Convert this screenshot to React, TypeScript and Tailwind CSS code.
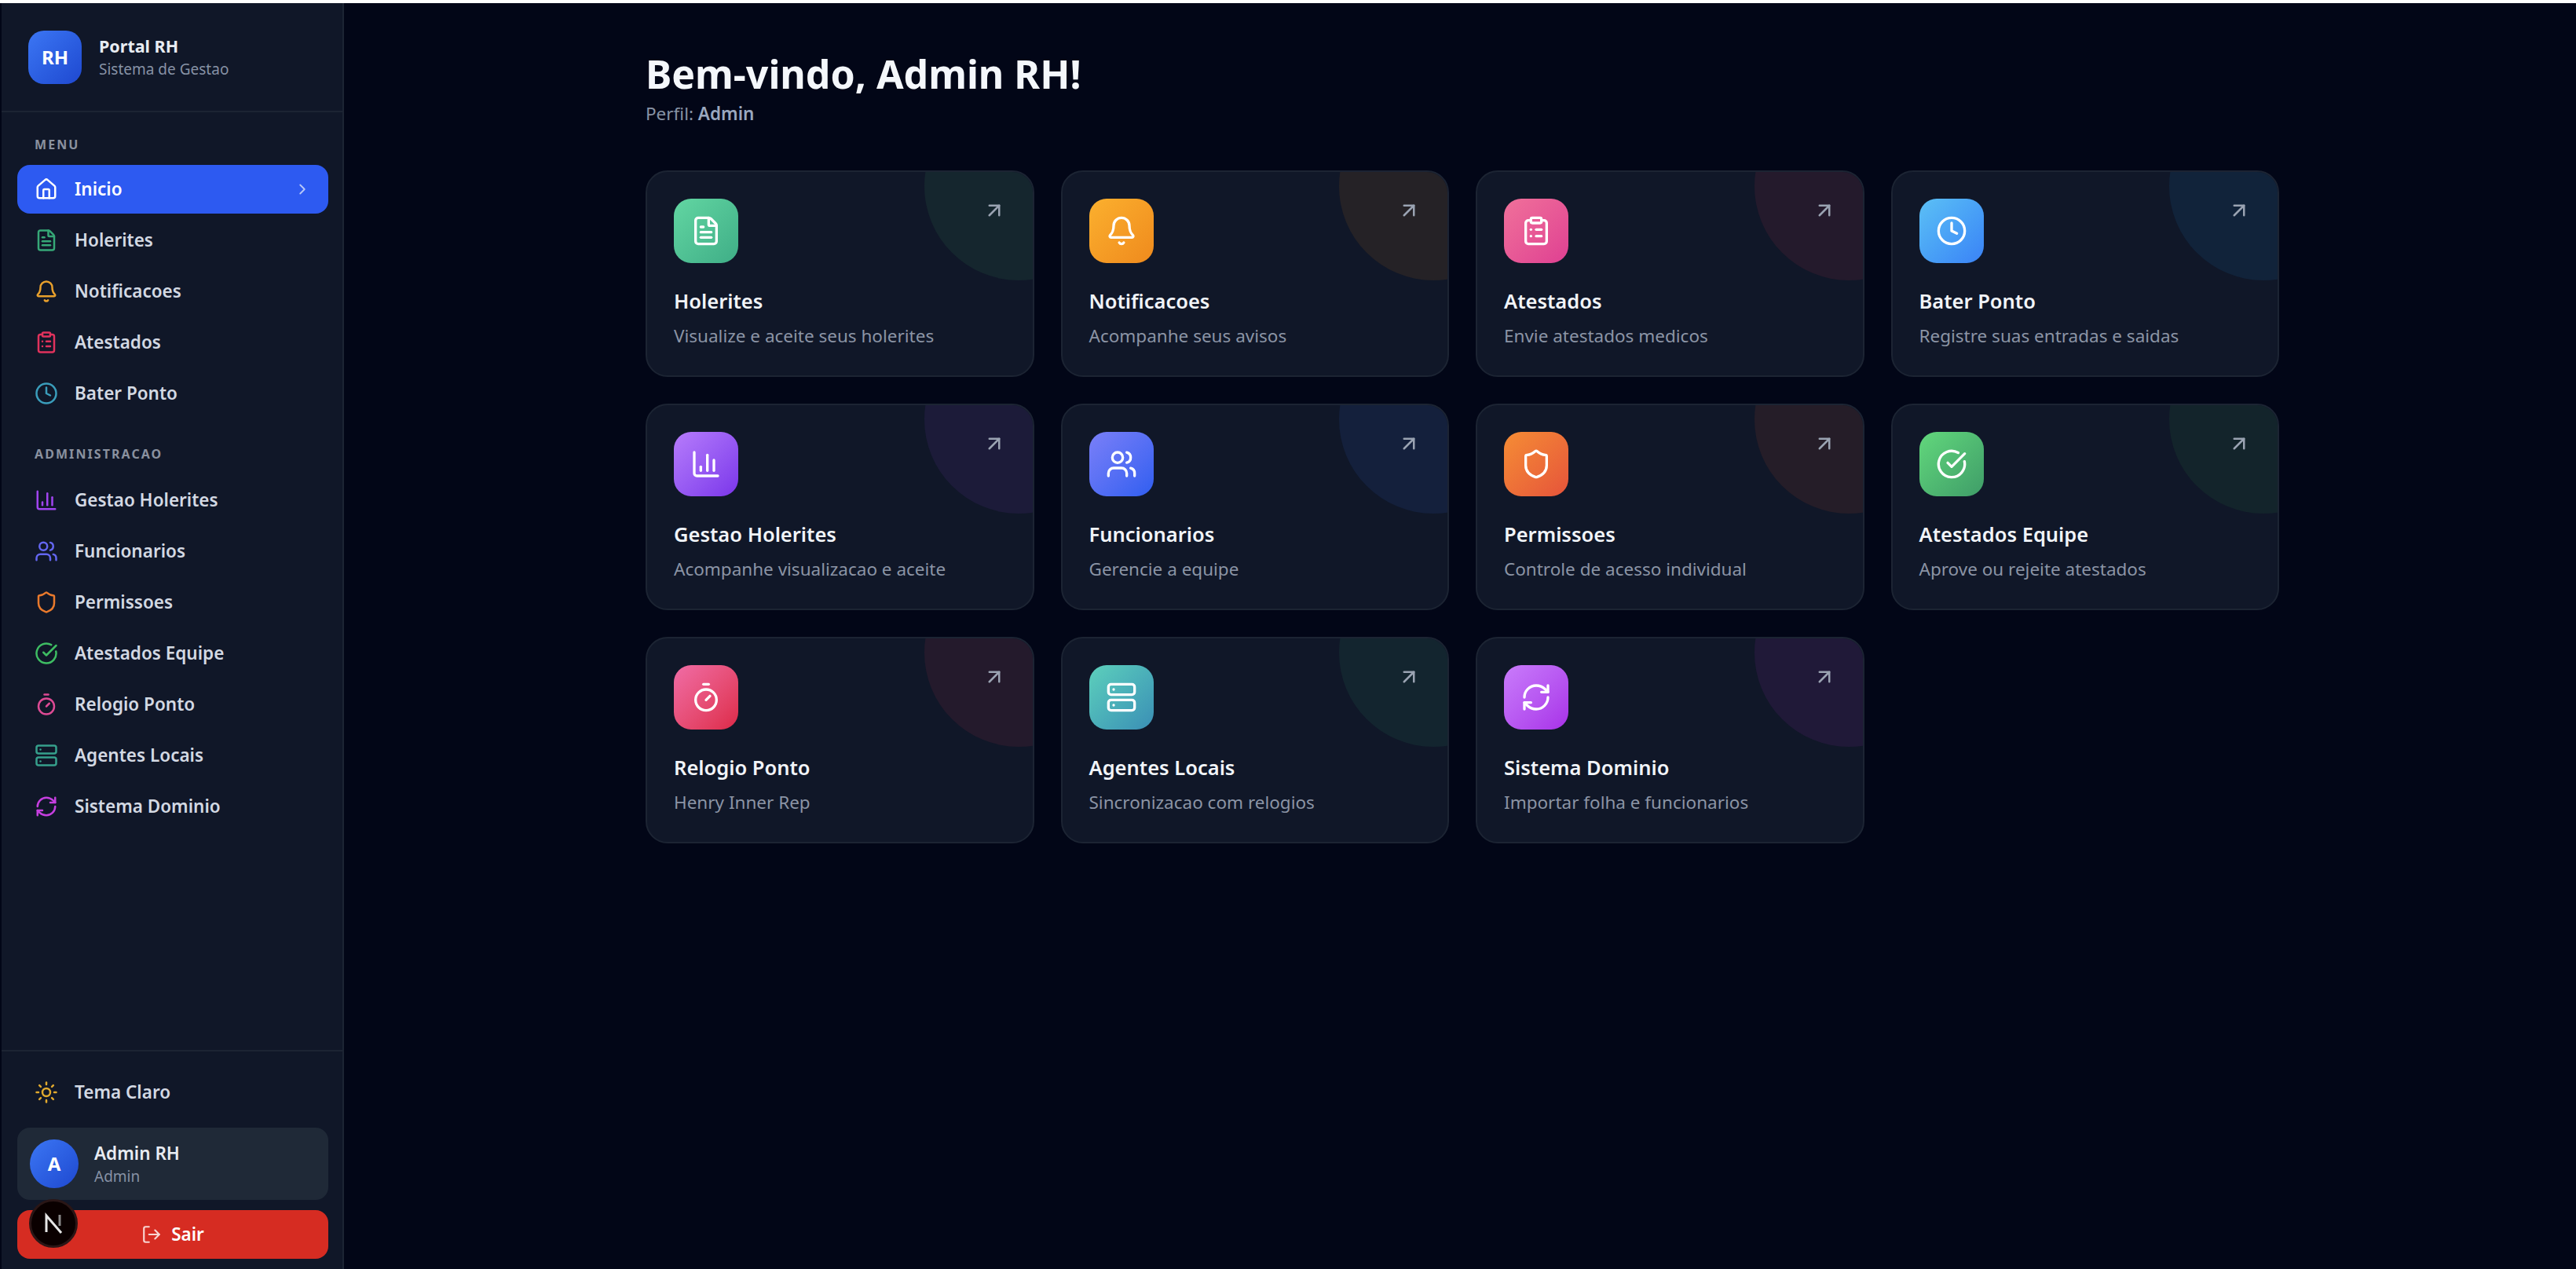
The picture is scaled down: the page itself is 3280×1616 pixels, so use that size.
import React from "react";
import {
  ArrowUpRight,
  BarChart3,
  Bell,
  CheckCircle,
  ChevronRight,
  ClipboardList,
  Clock,
  FileText,
  Home,
  LogOut,
  RefreshCw,
  Server,
  Shield,
  Sun,
  Timer,
  Users,
} from "lucide-react";

const menuItems = [
  { label: "Holerites", icon: FileText, color: "text-[#36a877]" },
  { label: "Notificacoes", icon: Bell, color: "text-[#e8a02c]" },
  { label: "Atestados", icon: ClipboardList, color: "text-[#e0325c]" },
  { label: "Bater Ponto", icon: Clock, color: "text-[#3a9dbb]" },
];

const adminItems = [
  { label: "Gestao Holerites", icon: BarChart3, color: "text-[#a145f0]" },
  { label: "Funcionarios", icon: Users, color: "text-[#6366f1]" },
  { label: "Permissoes", icon: Shield, color: "text-[#ea7a2c]" },
  { label: "Atestados Equipe", icon: CheckCircle, color: "text-[#3ebd63]" },
  { label: "Relogio Ponto", icon: Timer, color: "text-[#dd4a94]" },
  { label: "Agentes Locais", icon: Server, color: "text-[#36a08c]" },
  { label: "Sistema Dominio", icon: RefreshCw, color: "text-[#c63fe0]" },
];

const cards = [
  { title: "Holerites", desc: "Visualize e aceite seus holerites", icon: FileText, box: "from-[#62d6a2] to-[#3fae87]", blob: "bg-[#15262e]" },
  { title: "Notificacoes", desc: "Acompanhe seus avisos", icon: Bell, box: "from-[#fbb02e] to-[#ef8a1d]", blob: "bg-[#252226]" },
  { title: "Atestados", desc: "Envie atestados medicos", icon: ClipboardList, box: "from-[#f0709a] to-[#df3f92]", blob: "bg-[#241a2c]" },
  { title: "Bater Ponto", desc: "Registre suas entradas e saidas", icon: Clock, box: "from-[#5cc0f5] to-[#3b82f6]", blob: "bg-[#11233a]" },
  { title: "Gestao Holerites", desc: "Acompanhe visualizacao e aceite", icon: BarChart3, box: "from-[#b77bfb] to-[#7c33ea]", blob: "bg-[#1c1b39]" },
  { title: "Funcionarios", desc: "Gerencie a equipe", icon: Users, box: "from-[#7a7ff8] to-[#2f5ef0]", blob: "bg-[#14203c]" },
  { title: "Permissoes", desc: "Controle de acesso individual", icon: Shield, box: "from-[#f58c34] to-[#e5533a]", blob: "bg-[#251d28]" },
  { title: "Atestados Equipe", desc: "Aprove ou rejeite atestados", icon: CheckCircle, box: "from-[#62d87c] to-[#3f9d68]", blob: "bg-[#13242b]" },
  { title: "Relogio Ponto", desc: "Henry Inner Rep", icon: Timer, box: "from-[#f06ca6] to-[#dd2748]", blob: "bg-[#241a2c]" },
  { title: "Agentes Locais", desc: "Sincronizacao com relogios", icon: Server, box: "from-[#5dd0bb] to-[#3b8fb5]", blob: "bg-[#13252f]" },
  { title: "Sistema Dominio", desc: "Importar folha e funcionarios", icon: RefreshCw, box: "from-[#c97bfb] to-[#a82fe8]", blob: "bg-[#201938]" },
];

function NavItem({ label, icon: Icon, color }: { label: string; icon: React.ElementType; color: string }) {
  return (
    <div className="flex h-[62px] items-center gap-[21px] rounded-[16px] px-[22px] text-[22.5px] font-semibold text-[#d3d9e3]">
      <Icon size={30} strokeWidth={2} className={color} />
      <span>{label}</span>
    </div>
  );
}

export default function App() {
  return (
    <div
      className="flex h-[1616px] w-[3280px] flex-col overflow-hidden bg-[#020617]"
      style={{ fontFamily: '"Noto Sans", "Open Sans", sans-serif' }}
    >
      <div className="h-[4px] bg-white" />
      <div className="flex min-h-0 flex-1">
        {/* Sidebar */}
        <aside className="ml-[2px] flex w-[436px] flex-col border-r-2 border-[#1c2433] bg-[#101728]">
          <div className="flex h-[139px] items-center gap-[22px] border-b-2 border-[#1c2433] px-[34px]">
            <div className="flex h-[68px] w-[68px] items-center justify-center rounded-[20px] bg-gradient-to-br from-[#3c76f4] to-[#1f48d0] text-[24px] font-bold text-white">
              RH
            </div>
            <div>
              <div className="text-[21.5px] leading-[30px] font-bold text-[#e8ecf2]">Portal RH</div>
              <div className="text-[19px] leading-[28px] text-[#8792a5]">Sistema de Gestao</div>
            </div>
          </div>

          <nav className="flex flex-col pr-[18px] pl-[20px]">
            <div className="mt-[30px] mb-[15px] h-[22px] px-[22px] text-[16px] leading-[22px] font-bold tracking-[0.13em] text-[#8a919f]">
              MENU
            </div>
            <div className="flex flex-col gap-[3px]">
              <div className="flex h-[62px] items-center gap-[21px] rounded-[16px] bg-[#2d5af1] px-[22px] text-[22.5px] font-semibold text-white">
                <Home size={30} strokeWidth={2} />
                <span className="flex-1">Inicio</span>
                <ChevronRight size={22} className="text-[#b8c8f8]" />
              </div>
              {menuItems.map((item) => (
                <NavItem key={item.label} {...item} />
              ))}
            </div>
            <div className="mt-[35px] mb-[17px] h-[22px] px-[22px] text-[16px] leading-[22px] font-bold tracking-[0.13em] text-[#8a919f]">
              ADMINISTRACAO
            </div>
            <div className="flex flex-col gap-[3px]">
              {adminItems.map((item) => (
                <NavItem key={item.label} {...item} />
              ))}
            </div>
          </nav>

          <div className="mt-auto flex flex-col border-t-2 border-[#1c2433] pr-[18px] pb-[13px] pl-[20px]">
            <div className="mt-[21px] flex h-[62px] items-center gap-[21px] px-[22px] text-[22.5px] font-semibold text-[#d3d9e3]">
              <Sun size={30} className="text-[#e0a92e]" />
              <span>Tema Claro</span>
            </div>
            <div className="mt-[14px] flex h-[92px] items-center gap-[20px] rounded-[16px] bg-[#1f2937] px-[16px]">
              <div className="flex h-[62px] w-[62px] items-center justify-center rounded-full bg-gradient-to-br from-[#3c76f4] to-[#1f48d0] text-[24px] font-bold text-white">
                A
              </div>
              <div>
                <div className="text-[22.5px] leading-[31px] font-semibold text-[#e8ecf2]">Admin RH</div>
                <div className="text-[19px] leading-[28px] text-[#8792a5]">Admin</div>
              </div>
            </div>
            <div className="relative mt-[13px] flex h-[62px] items-center justify-center gap-[12px] rounded-[16px] bg-[#d62c22] text-[22.5px] font-semibold text-white">
              <LogOut size={26} className="text-[#f8d5d2]" />
              <span>Sair</span>
              {/* dev indicator do Next */}
              <div className="absolute top-[-14px] left-[15px] flex h-[62px] w-[62px] items-center justify-center rounded-full border-[3px] border-[#2a1616] bg-[#0a0000]">
                <svg width="28" height="28" viewBox="0 0 28 28" fill="none">
                  <path d="M5 25V4L24 26" stroke="#e6e6e6" strokeWidth="3" />
                  <path d="M22 3V17" stroke="#8a8a8a" strokeWidth="3" />
                </svg>
              </div>
            </div>
          </div>
        </aside>

        {/* Conteudo */}
        <main className="flex-1 pt-[60px] pl-[384px]">
          <h1 className="text-[50px] leading-[60px] font-bold text-[#f4f7fb]">Bem-vindo, Admin RH!</h1>
          <p className="mt-[5px] text-[22.5px] leading-[32px] text-[#8792a5]">
            Perfil: <span className="font-semibold text-[#9aa8bf]">Admin</span>
          </p>

          <div className="mt-[56px] grid w-[2080px] grid-cols-4 gap-[34px]">
            {cards.map((card) => (
              <div
                key={card.title}
                className="relative h-[263px] overflow-hidden rounded-[28px] border-2 border-[#1c2433] bg-[#101728] px-[34px] pt-[34px]"
              >
                <div className={`absolute top-[-102px] right-[-102px] h-[240px] w-[240px] rounded-full ${card.blob}`} />
                <ArrowUpRight size={30} className="absolute top-[34px] right-[34px] text-[#9aa3b2]" />
                <div className={`relative flex h-[82px] w-[82px] items-center justify-center rounded-[22px] bg-gradient-to-br ${card.box}`}>
                  <card.icon size={40} strokeWidth={2} className="text-white" />
                </div>
                <div className="relative mt-[30px] text-[25.5px] leading-[36px] font-semibold text-[#f1f4f8]">{card.title}</div>
                <div className="relative mt-[11px] text-[22.5px] leading-[32px] text-[#8b94a5]">{card.desc}</div>
              </div>
            ))}
          </div>
        </main>
      </div>
    </div>
  );
}
